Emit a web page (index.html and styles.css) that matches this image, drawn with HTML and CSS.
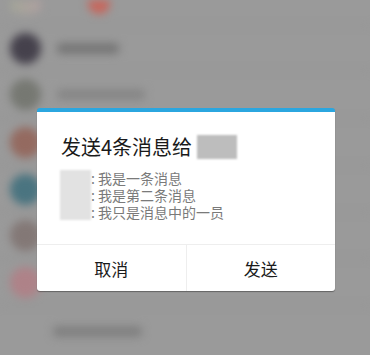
FILE: index.html
```html
<!DOCTYPE html>
<html lang="zh-CN">
<head>
<meta charset="utf-8">
<link rel="stylesheet" href="styles.css">
</head>
<body>
<div class="screen">
  <div class="list">
    <div class="row row-0">
      <div class="avatar av-0"></div>
      <div class="badge"></div>
    </div>
    <div class="row row-1">
      <div class="avatar av-1"></div>
      <div class="name name-1"></div>
    </div>
    <div class="row row-2">
      <div class="avatar av-2"></div>
      <div class="name name-2"></div>
    </div>
    <div class="row row-3">
      <div class="avatar av-3"></div>
    </div>
    <div class="row row-4">
      <div class="avatar av-4"></div>
    </div>
    <div class="row row-5">
      <div class="avatar av-5"></div>
    </div>
    <div class="row row-6">
      <div class="avatar av-6"></div>
    </div>
    <div class="row row-7">
      <div class="name name-7"></div>
    </div>
  </div>

  <div class="dialog">
    <div class="dialog-body">
      <div class="title">发送4条消息给 <span class="mask mask-title"></span></div>
      <div class="messages">
        <div class="mask mask-sender"></div>
        <div class="lines">
          <div class="line">: 我是一条消息</div>
          <div class="line">: 我是第二条消息</div>
          <div class="line">: 我只是消息中的一员</div>
        </div>
      </div>
    </div>
    <div class="actions">
      <div class="btn">取消</div>
      <div class="btn btn-right">发送</div>
    </div>
  </div>
</div>
</body>
</html>
```

FILE: styles.css
```css
html, body {
  margin: 0;
  padding: 0;
}

body {
  width: 370px;
  height: 355px;
  overflow: hidden;
  background: #9a9a9a;
  font-family: "Noto Sans CJK SC", "Noto Sans", sans-serif;
}

.screen {
  position: relative;
  width: 370px;
  height: 355px;
  overflow: hidden;
  background: #9a9a9a;
}

.list {
  display: flex;
  flex-direction: column;
  filter: blur(4px);
}

.row {
  position: relative;
  display: flex;
  align-items: center;
  gap: 16px;
  padding-left: 10px;
  border-bottom: 1px solid #8e8e8e;
  box-sizing: border-box;
  flex: none;
}

.row-0 { height: 26px; align-items: flex-start; }
.row-1 { height: 45px; }
.row-2 { height: 48px; }
.row-3 { height: 47px; }
.row-4 { height: 47px; }
.row-5 { height: 46px; }
.row-6 { height: 47px; }
.row-7 { height: 50px; border-bottom: none; padding-left: 53px; }

.avatar {
  width: 31px;
  height: 31px;
  border-radius: 50%;
  flex: none;
}

.av-0 {
  height: 14px;
  border-radius: 0 0 50% 50%;
  background: linear-gradient(90deg, #a3a698 0%, #b0a0a0 100%);
}
.av-1 { background: #45414c; }
.av-2 { background: #767872; }
.av-3 { background: #946a60; }
.av-4 { background: #4a7480; }
.av-5 { background: #837876; }
.av-6 { background: #ae8288; }

.badge {
  width: 22px;
  height: 14px;
  border-radius: 0 0 11px 11px;
  background: #c7665c;
  margin-left: 31px;
}

.name {
  height: 11px;
  border-radius: 4px;
  background: #767676;
}

.name-1 { width: 62px; }
.name-2 { width: 88px; background: #868686; }
.name-7 { width: 89px; background: #808080; }

.dialog {
  position: absolute;
  left: 37px;
  top: 108px;
  width: 298px;
  background: #ffffff;
  border-top: 4px solid #2ba6df;
  border-radius: 3px;
  box-shadow: 0 1px 1px rgba(0, 0, 0, 0.35);
}

.dialog-body {
  padding: 23px 24px 23px 24px;
  display: flex;
  flex-direction: column;
  gap: 11px;
}

.title {
  font-size: 20px;
  line-height: 24px;
  color: #1a1a1a;
  display: flex;
  align-items: center;
  white-space: pre;
}

.mask-title {
  display: inline-block;
  width: 40px;
  height: 24px;
  background: #bdbdbd;
  filter: blur(1px);
}

.messages {
  display: flex;
  margin-left: -1px;
}

.mask-sender {
  width: 31px;
  height: 50px;
  background: #e2e2e2;
  filter: blur(1px);
}

.lines {
  display: flex;
  flex-direction: column;
}

.line {
  font-size: 14px;
  line-height: 17px;
  color: #7a7a7a;
  white-space: pre;
}

.actions {
  display: flex;
  border-top: 1px solid #eeeeee;
  height: 46px;
}

.btn {
  flex: 1;
  display: flex;
  align-items: center;
  justify-content: center;
  font-size: 17px;
  color: #1a1a1a;
}

.btn-right {
  border-left: 1px solid #eeeeee;
}
```
